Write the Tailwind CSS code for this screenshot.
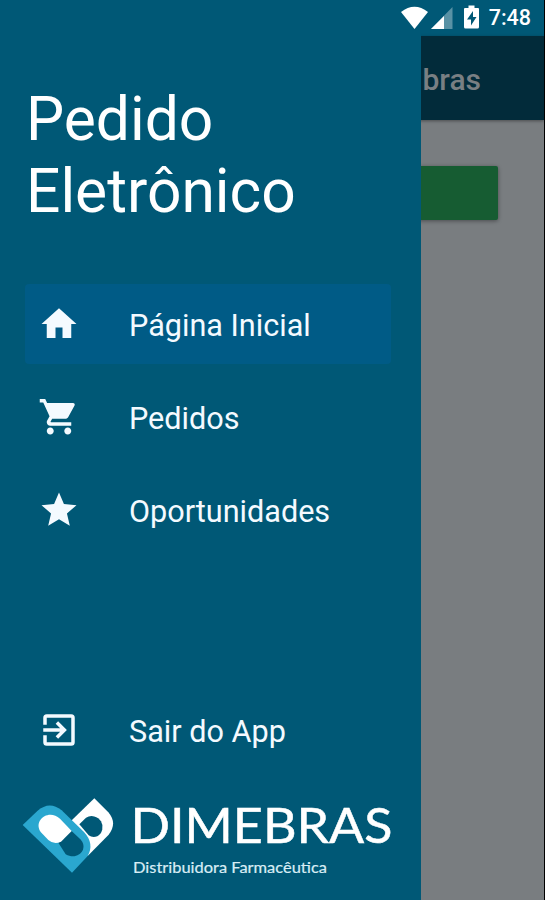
<!DOCTYPE html>
<html lang="pt-BR">
<head>
<meta charset="utf-8">
<title>Pedido Eletrônico</title>
<script src="https://cdn.jsdelivr.net/npm/@tailwindcss/browser@4"></script>
</head>
<body class="relative flex h-[900px] w-[545px] flex-col overflow-hidden border-r border-black bg-[#797d80] font-['Roboto',sans-serif] text-[#f4faff]">
  <div class="h-9 shrink-0 bg-[#005876]"></div>
  <header class="flex h-[84px] shrink-0 items-center justify-end bg-[#022b3a] pr-[63px] pt-1 shadow-[0_1px_3px_#0006]">
    <h2 class="text-[30px] font-medium leading-none text-[#797f83]"><span class="invisible">Dime</span>bras</h2>
  </header>
  <main class="px-[46px] pt-[46px]">
    <div class="h-[54px] rounded-[2px] bg-[#165c32] shadow-[0_1px_4px_#0006]"></div>
  </main>

  <aside class="absolute inset-y-0 left-0 flex w-[421px] flex-col bg-[#005876]">
    <h1 class="mt-[84px] pl-[26px] text-[60.5px] leading-[72px] text-white">Pedido<br>Eletrônico</h1>
    <nav class="mt-[56px] flex grow flex-col gap-[13px] pl-[25px] pr-[30px] text-[30.6px] leading-none">
      <a class="flex h-20 shrink-0 items-center rounded-[4px] bg-[#005b86] pl-[13px]">
        <svg class="mr-[49px] h-[42px] w-[42px]" viewBox="0 0 24 24" fill="currentColor"><path d="M10 20v-6h4v6h5v-8h3L12 3 2 12h3v8z"/></svg><span class="pt-[5px]">Página Inicial</span>
      </a>
      <a class="flex h-20 shrink-0 items-center pl-[13px]">
        <svg class="mr-[49px] h-[42px] w-[42px]" viewBox="0 0 24 24" fill="currentColor"><path d="M7 18c-1.100 0-1.990.9-1.990 2S5.900 22 7 22s2-.9 2-2-.9-2-2-2zM1 1.700v2h2l3.600 7.890-1.350 2.450c-.16.28-.25.61-.25.960 0 1.100.9 2 2 2h12v-2H7.420c-.14 0-.25-.11-.25-.25l.03-.12.900-1.630h7.450c.75 0 1.410-.41 1.750-1.030l3.580-6.490A1 1 0 0 0 20 4H5.210l-1.080-2.300H1zm16 16.300c-1.100 0-1.990.9-1.990 2s.89 2 1.990 2 2-.9 2-2-.9-2-2-2z"/></svg><span class="pt-[5px]">Pedidos</span>
      </a>
      <a class="flex h-20 shrink-0 items-center pl-[13px]">
        <svg class="mr-[49px] h-[42px] w-[42px]" viewBox="0 0 24 24" fill="currentColor"><path d="M12 17.270 18.180 21l-1.640-7.030L22 9.240l-7.190-.61L12 2 9.190 8.630 2 9.240l5.460 4.730L5.820 21z"/></svg><span class="pt-[5px]">Oportunidades</span>
      </a>
      <a class="mb-[27px] mt-auto flex h-20 shrink-0 items-center pl-[13px]">
        <svg class="mr-[49px] h-[42px] w-[42px]" viewBox="0 0 24 24" fill="currentColor"><path d="M10.090 15.590 11.500 17l5-5-5-5-1.410 1.410L12.670 11H3v2h9.670l-2.580 2.590zM19 3H5a2 2 0 0 0-2 2v4h2V5h14v14H5v-4H3v4a2 2 0 0 0 2 2h14a2 2 0 0 0 2-2V5a2 2 0 0 0-2-2z"/></svg><span class="pt-[5px]">Sair do App</span>
      </a>
    </nav>
    <footer class="flex h-[103px] shrink-0 pl-[22px]">
      <svg class="mt-px h-[76px] w-[92px] shrink-0" viewBox="36 39 276 228">
        <path fill="#fff" d="M253 40 295 82Q323 115 296 149L233 213 180 140 186 105Z"/>
        <path fill="#005876" d="M208 118 228 98A32 32 0 1 1 262 154Q247 159 236 151Z"/>
        <path fill="#2aa7cf" d="M38 120 82 78Q118 46 155 76L222 141Q254 176 233 213L186 263Z"/>
        <path fill="#005876" d="M184 137 211 163C237 190 205 229 167 208L145 173Z"/>
        <path fill="#fff" d="M185 138 150 101C117 70 68 105 92 141L115 165Q132 180 153 170Z"/>
      </svg>
      <svg class="ml-[14px] h-[84px] w-[284px] shrink-0 overflow-visible" viewBox="-4 0 284 84" fill="#fff">
        <text x="-1.500" y="45.800" font-family="Lato, sans-serif" font-size="48.500" stroke="#fff" stroke-width=".5" textLength="262" lengthAdjust="spacingAndGlyphs">DIMEBRAS</text>
        <text x="1" y="76" font-family="Lato, sans-serif" font-size="16" fill="#d9edf5" stroke="#d9edf5" stroke-width=".2" textLength="194" lengthAdjust="spacingAndGlyphs">Distribuidora Farmacêutica</text>
      </svg>
    </footer>
  </aside>

  <div class="absolute right-[13px] top-0 flex h-9 items-center text-white">
    <svg class="h-[34px] w-[82px]" viewBox="0 0 82 34">
      <path fill="#fff" d="M0 11Q13.500 .5 27 11L13.500 28Z"/>
      <path fill="#fff" fill-opacity=".35" d="M51.500 6V28H30Z"/>
      <path fill="#fff" d="M43 15V28H30Z"/>
      <path fill="#fff" d="M67.500 4.500h6v2.500H77a1 1 0 0 1 1 1V26a1.500 1.500 0 0 1-1.500 1.500h-12A1.500 1.500 0 0 1 63 26V8a1 1 0 0 1 1-1h3.500Z"/>
      <path fill="#005876" d="M72 10 66 18.500h4V24.500l5.500-8.500h-3.500Z"/>
    </svg>
    <span class="ml-[6px] text-[21.5px] font-medium leading-none">7:48</span>
  </div>
</body>
</html>
